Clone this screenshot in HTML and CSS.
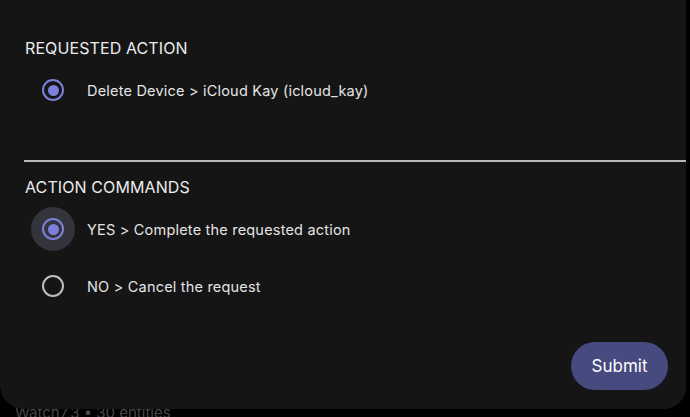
FILE: index.html
```html
<!DOCTYPE html>
<html lang="en">
<head>
    <meta charset="UTF-8">
    <meta name="viewport" content="width=device-width, initial-scale=1.0">
    <title>Action request</title>
    <link rel="stylesheet" href="styles.css">
</head>
<body>
    <div class="page">
        <div class="entity-meta">Watch7,3 &bull; 30 entities</div>
    </div>
    <div class="dialog">
        <div class="section">
            <div class="section-title">REQUESTED ACTION</div>
            <div class="option">
                <span class="radio-wrap"><span class="radio checked"></span></span>
                <span class="label">Delete Device &gt; iCloud Kay (icloud_kay)</span>
            </div>
        </div>
        <div class="divider"></div>
        <div class="section commands">
            <div class="section-title">ACTION COMMANDS</div>
            <div class="option">
                <span class="radio-wrap hover"><span class="radio checked"></span></span>
                <span class="label">YES &gt; Complete the requested action</span>
            </div>
            <div class="option">
                <span class="radio-wrap"><span class="radio"></span></span>
                <span class="label">NO &gt; Cancel the request</span>
            </div>
        </div>
        <div class="actions">
            <button class="btn-submit">Submit</button>
        </div>
    </div>
</body>
</html>
```

FILE: styles.css
```css
body {
    margin: 0;
    background-color: #000;
    font-family: Inter, Roboto, "Noto Sans", sans-serif;
    color: #e6e6e6;
    height: 417px;
    overflow: hidden;
}
.page {
    padding: 403px 0 0 15px;
}
.entity-meta {
    color: #474747;
    font-size: 15px;
    line-height: 20px;
}
.dialog {
    position: absolute;
    top: 0;
    left: 0;
    width: 686px;
    height: 409px;
    background-color: #151515;
    border-radius: 0 0 22px 24px;
    box-sizing: border-box;
    padding-top: 37px;
}
.section {
    padding-left: 25px;
}
.section-title {
    font-size: 16px;
    line-height: 22px;
    color: #ececec;
    letter-spacing: 0.1px;
}
.option {
    display: flex;
    align-items: center;
    height: 44px;
    margin-left: 6px;
}
.section .option:nth-child(2) {
    margin-top: 9px;
}
.commands .option:nth-child(2) {
    margin-top: 9px;
}
.commands .option + .option {
    margin-top: 13px;
}
.radio-wrap {
    width: 44px;
    height: 44px;
    border-radius: 50%;
    display: flex;
    align-items: center;
    justify-content: center;
    flex-shrink: 0;
}
.radio-wrap.hover {
    background-color: #34343c;
}
.radio {
    width: 18px;
    height: 18px;
    border-radius: 50%;
    border: 2.5px solid #bdbdbd;
    display: flex;
    align-items: center;
    justify-content: center;
}
.radio.checked {
    border-color: #7b80dc;
}
.radio.checked::after {
    content: "";
    width: 11px;
    height: 11px;
    border-radius: 50%;
    background-color: #7b80dc;
}
.label {
    margin-left: 12px;
    font-size: 14.5px;
    color: #e4e4e4;
    letter-spacing: 0.2px;
}
.divider {
    margin: 48px 0 14px 24px;
    height: 2px;
    background-color: #b8b8b8;
}
.actions {
    display: flex;
    justify-content: flex-end;
    padding: 34px 18px 0 0;
}
.btn-submit {
    width: 97px;
    height: 48px;
    border: none;
    border-radius: 24px;
    background-color: #464a7e;
    color: #fff;
    font-family: Inter, Roboto, "Noto Sans", sans-serif;
    font-size: 17px;
    cursor: pointer;
}
```
